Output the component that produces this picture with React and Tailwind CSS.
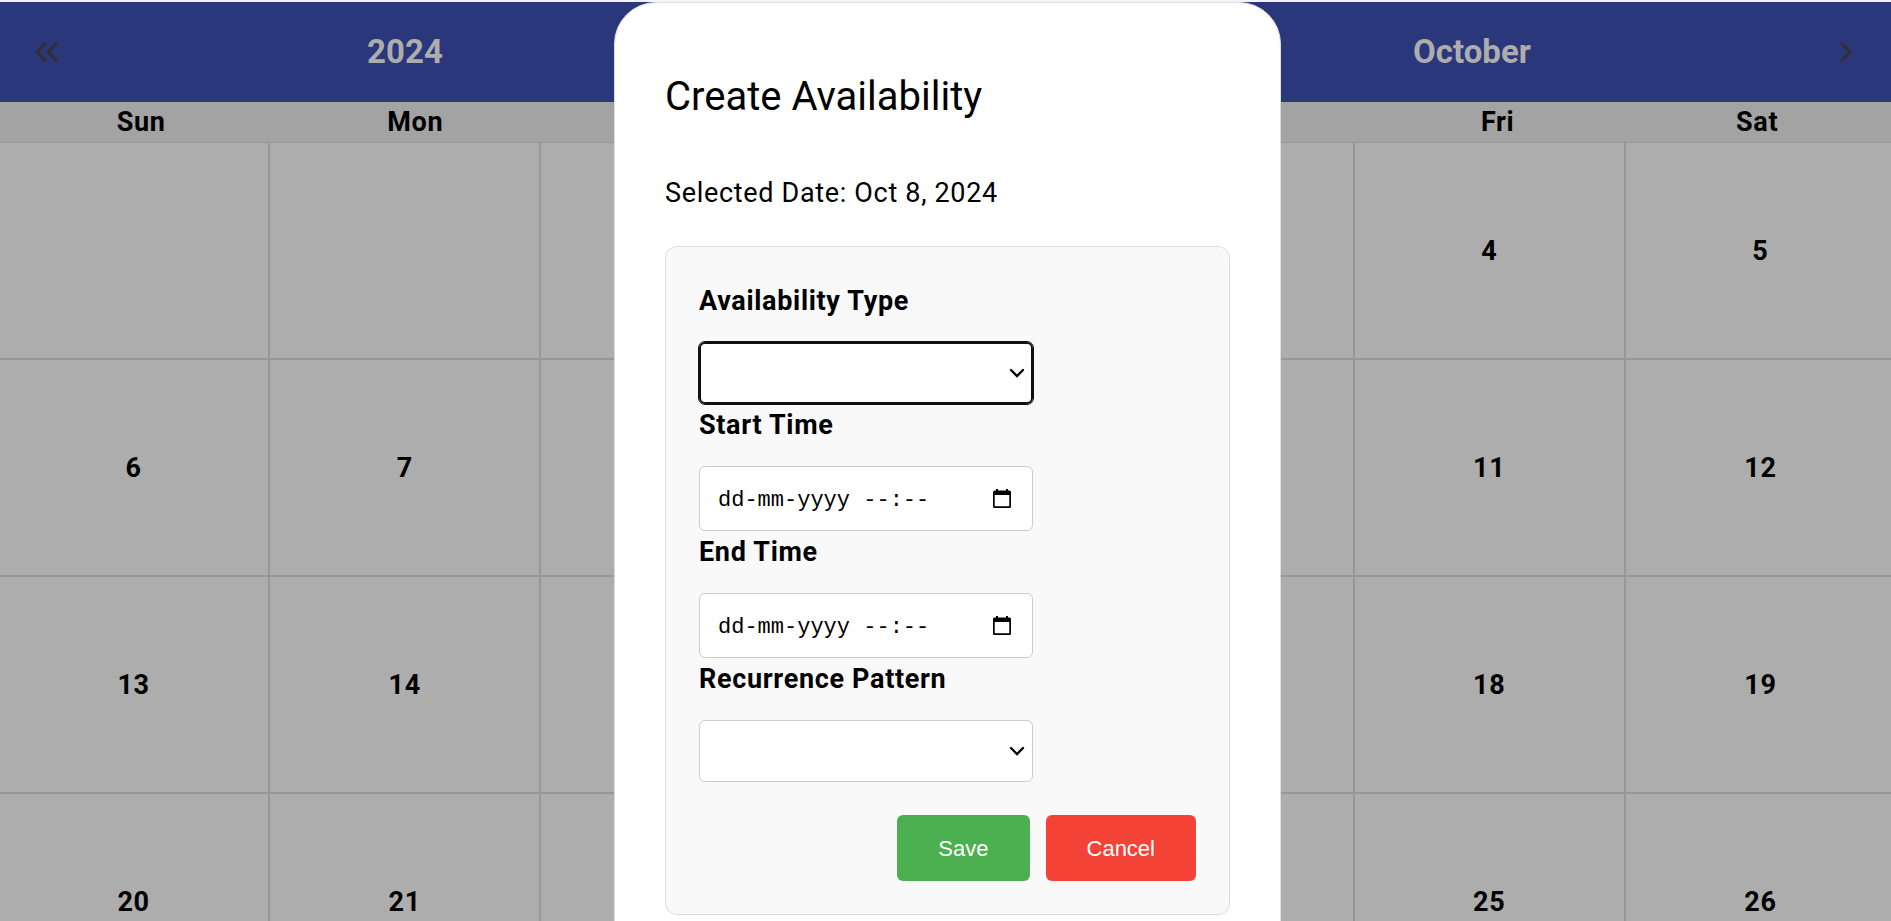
const weekdays = ['Sun', 'Mon', 'Tue', 'Wed', 'Thu', 'Fri', 'Sat'];
const days = [null, null, ...Array.from({ length: 26 }, (_, i) => i + 1)];

function Chevron() {
  return (
    <svg className="pointer-events-none absolute top-1/2 right-2 -translate-y-1/2" width="16" height="10" viewBox="0 0 16 10" fill="none" stroke="#000" strokeWidth="2.300" strokeLinecap="round" aria-hidden="true">
      <path d="M2 2l6 6 6-6" />
    </svg>
  );
}

function CalendarIcon() {
  return (
    <svg width="18" height="20" viewBox="0 0 18 20" aria-hidden="true">
      <path fill="#000" fillRule="evenodd" d="M3 0h2v1.500h8V0h2v1.500h1.500a1.500 1.500 0 0 1 1.500 1.500v14.500a1.500 1.500 0 0 1-1.500 1.500h-15A1.500 1.500 0 0 1 0 17.500v-14.500A1.500 1.500 0 0 1 1.500 1.500H3zM1.700 6v11.300h14.600V6z" />
    </svg>
  );
}

const labelClass = 'block text-[27px] leading-[42px] font-bold tracking-wide';

function SelectField({ id, label, focused }) {
  return (
    <div>
      <label htmlFor={id} className={labelClass}>{label}</label>
      <div className="relative mt-5 w-[334px] max-w-full">
        <select
          id={id}
          defaultValue=""
          className={
            focused
              ? 'block h-[62px] w-full appearance-none rounded-md border-2 border-[#101010] bg-white px-4 outline-1 outline-[#101010]'
              : 'block h-[62px] w-full appearance-none rounded-md border border-[#ccc] bg-white px-4'
          }
        >
          <option value=""></option>
        </select>
        <Chevron />
      </div>
    </div>
  );
}

function DateField({ id, label }) {
  return (
    <div>
      <label htmlFor={id} className={labelClass}>{label}</label>
      <div className="relative mt-5 w-[334px] max-w-full">
        <input
          id={id}
          type="text"
          placeholder="dd-mm-yyyy --:--"
          className="block h-[65px] w-full rounded-md border border-[#ccc] bg-white pt-1 pr-14 pl-[18px] font-['Liberation_Mono',monospace] text-[22px] placeholder:text-black"
        />
        <button type="button" aria-label={`Pick ${label}`} className="absolute top-1/2 right-[22px] -translate-y-1/2">
          <CalendarIcon />
        </button>
      </div>
    </div>
  );
}

export default function App() {
  return (
    <div className="relative h-screen overflow-hidden bg-[#adadad] font-[Roboto,sans-serif] text-black">
      <div className="h-[2px] bg-[#f1f3f5]" />
      <header className="flex h-[100px] items-center justify-between bg-[#2a377b] pr-[38px] pl-[35px] text-[33px] font-bold text-[#adadad]">
        <button type="button" aria-label="Previous year">
          <svg width="24" height="20" viewBox="0 0 24 20" fill="none" stroke="#303030" strokeWidth="3" aria-hidden="true">
            <path d="M11 1l-9 9 9 9M22 1l-9 9 9 9" />
          </svg>
        </button>
        <h2>2024</h2>
        <span className="w-[354px]" />
        <h2>October</h2>
        <button type="button" aria-label="Next month">
          <svg width="14" height="20" viewBox="0 0 14 20" fill="none" stroke="#303030" strokeWidth="3" aria-hidden="true">
            <path d="M2 1l9 9-9 9" />
          </svg>
        </button>
      </header>
      <div className="flex h-[41px] items-center justify-around border-b border-[#979797] bg-[#a3a3a3] pr-0.5 pl-1.5 text-[27px] font-bold tracking-wide">
        {weekdays.map((d) => (
          <span key={d}>{d}</span>
        ))}
      </div>
      <div className="-mr-1.5 -ml-px grid auto-rows-[217px] grid-cols-7 text-[27px] font-bold tracking-wide">
        {days.map((d, i) => (
          <div key={i} className="flex items-center justify-center border-r-2 border-b-2 border-[#979797] pt-0.5">
            {d}
          </div>
        ))}
      </div>

      <div className="absolute inset-y-0 -right-1 left-0 flex justify-center pt-[2px]">
        <section role="dialog" aria-labelledby="dialog-title" className="h-[1000px] w-[667px] shrink-0 rounded-t-[42px] border border-[#ddd] bg-white px-[50px]">
          <h1 id="dialog-title" className="mt-[70px] text-[40px] leading-[48px]">Create Availability</h1>
          <p className="mt-[52px] text-[27px] leading-10 tracking-wide">Selected Date: Oct 8, 2024</p>
          <form className="mt-[33px] rounded-xl border border-[#ddd] bg-[#f9f9f9] p-[33px]">
            <SelectField id="type" label="Availability Type" focused />
            <DateField id="start" label="Start Time" />
            <DateField id="end" label="End Time" />
            <SelectField id="recurrence" label="Recurrence Pattern" />
            <div className="mt-[33px] flex justify-end gap-4 font-['Liberation_Sans',sans-serif] text-[22px] text-white">
              <button type="button" className="h-[66px] rounded-md bg-[#4caf50] px-[41px]">Save</button>
              <button type="button" className="h-[66px] rounded-md bg-[#f44336] px-[41px]">Cancel</button>
            </div>
          </form>
        </section>
      </div>
    </div>
  );
}
